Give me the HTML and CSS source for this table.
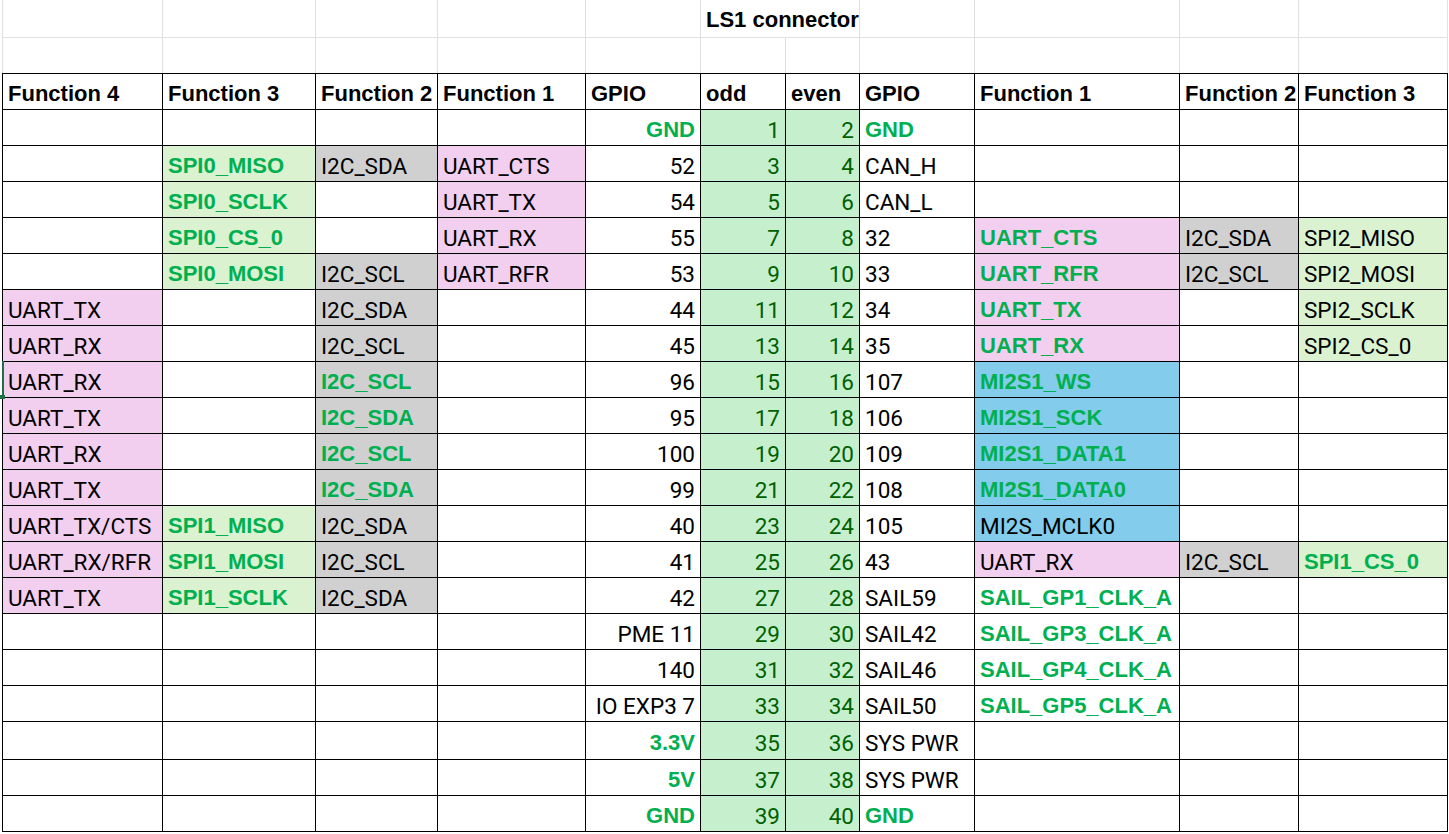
FILE: index.html
```html
<!DOCTYPE html>
<html lang="en">
<head>
<meta charset="utf-8">
<title>LS1 connector</title>
<link rel="stylesheet" href="styles.css">
</head>
<body>
<div class="sheet">
  <div class="top">
    <div class="g"></div><div class="g"></div><div class="g"></div><div class="g"></div><div class="g"></div>
    <div class="g title"><span>LS1 connector</span></div>
    <div class="g"></div><div class="g"></div><div class="g"></div><div class="g"></div>
    <div class="g"></div><div class="g"></div><div class="g"></div><div class="g"></div><div class="g"></div>
    <div class="g"></div><div class="g"></div><div class="g"></div><div class="g"></div><div class="g"></div><div class="g"></div>
  </div>
  <div class="tbl">
    <div class="c h">Function 4</div><div class="c h">Function 3</div><div class="c h">Function 2</div><div class="c h">Function 1</div><div class="c h">GPIO</div><div class="c h">odd</div><div class="c h">even</div><div class="c h">GPIO</div><div class="c h">Function 1</div><div class="c h">Function 2</div><div class="c h">Function 3</div>

    <div class="c"></div><div class="c"></div><div class="c"></div><div class="c"></div><div class="c r b">GND</div><div class="c r pin">1</div><div class="c r pin">2</div><div class="c b">GND</div><div class="c"></div><div class="c"></div><div class="c"></div>

    <div class="c"></div><div class="c lg b">SPI0_MISO</div><div class="c gy">I2C_SDA</div><div class="c pk">UART_CTS</div><div class="c r">52</div><div class="c r pin">3</div><div class="c r pin">4</div><div class="c">CAN_H</div><div class="c"></div><div class="c"></div><div class="c"></div>

    <div class="c"></div><div class="c lg b">SPI0_SCLK</div><div class="c"></div><div class="c pk">UART_TX</div><div class="c r">54</div><div class="c r pin">5</div><div class="c r pin">6</div><div class="c">CAN_L</div><div class="c"></div><div class="c"></div><div class="c"></div>

    <div class="c"></div><div class="c lg b">SPI0_CS_0</div><div class="c"></div><div class="c pk">UART_RX</div><div class="c r">55</div><div class="c r pin">7</div><div class="c r pin">8</div><div class="c">32</div><div class="c pk b">UART_CTS</div><div class="c gy">I2C_SDA</div><div class="c lg">SPI2_MISO</div>

    <div class="c"></div><div class="c lg b">SPI0_MOSI</div><div class="c gy">I2C_SCL</div><div class="c pk">UART_RFR</div><div class="c r">53</div><div class="c r pin">9</div><div class="c r pin">10</div><div class="c">33</div><div class="c pk b">UART_RFR</div><div class="c gy">I2C_SCL</div><div class="c lg">SPI2_MOSI</div>

    <div class="c pk">UART_TX</div><div class="c"></div><div class="c gy">I2C_SDA</div><div class="c"></div><div class="c r">44</div><div class="c r pin">11</div><div class="c r pin">12</div><div class="c">34</div><div class="c pk b">UART_TX</div><div class="c"></div><div class="c lg">SPI2_SCLK</div>

    <div class="c pk">UART_RX</div><div class="c"></div><div class="c gy">I2C_SCL</div><div class="c"></div><div class="c r">45</div><div class="c r pin">13</div><div class="c r pin">14</div><div class="c">35</div><div class="c pk b">UART_RX</div><div class="c"></div><div class="c lg">SPI2_CS_0</div>

    <div class="c pk">UART_RX</div><div class="c"></div><div class="c gy b">I2C_SCL</div><div class="c"></div><div class="c r">96</div><div class="c r pin">15</div><div class="c r pin">16</div><div class="c">107</div><div class="c bl b">MI2S1_WS</div><div class="c"></div><div class="c"></div>

    <div class="c pk">UART_TX</div><div class="c"></div><div class="c gy b">I2C_SDA</div><div class="c"></div><div class="c r">95</div><div class="c r pin">17</div><div class="c r pin">18</div><div class="c">106</div><div class="c bl b">MI2S1_SCK</div><div class="c"></div><div class="c"></div>

    <div class="c pk">UART_RX</div><div class="c"></div><div class="c gy b">I2C_SCL</div><div class="c"></div><div class="c r">100</div><div class="c r pin">19</div><div class="c r pin">20</div><div class="c">109</div><div class="c bl b">MI2S1_DATA1</div><div class="c"></div><div class="c"></div>

    <div class="c pk">UART_TX</div><div class="c"></div><div class="c gy b">I2C_SDA</div><div class="c"></div><div class="c r">99</div><div class="c r pin">21</div><div class="c r pin">22</div><div class="c">108</div><div class="c bl b">MI2S1_DATA0</div><div class="c"></div><div class="c"></div>

    <div class="c pk">UART_TX/CTS</div><div class="c lg b">SPI1_MISO</div><div class="c gy">I2C_SDA</div><div class="c"></div><div class="c r">40</div><div class="c r pin">23</div><div class="c r pin">24</div><div class="c">105</div><div class="c bl">MI2S_MCLK0</div><div class="c"></div><div class="c"></div>

    <div class="c pk">UART_RX/RFR</div><div class="c lg b">SPI1_MOSI</div><div class="c gy">I2C_SCL</div><div class="c"></div><div class="c r">41</div><div class="c r pin">25</div><div class="c r pin">26</div><div class="c">43</div><div class="c pk">UART_RX</div><div class="c gy">I2C_SCL</div><div class="c lg b">SPI1_CS_0</div>

    <div class="c pk">UART_TX</div><div class="c lg b">SPI1_SCLK</div><div class="c gy">I2C_SDA</div><div class="c"></div><div class="c r">42</div><div class="c r pin">27</div><div class="c r pin">28</div><div class="c">SAIL59</div><div class="c b">SAIL_GP1_CLK_A</div><div class="c"></div><div class="c"></div>

    <div class="c"></div><div class="c"></div><div class="c"></div><div class="c"></div><div class="c r">PME 11</div><div class="c r pin">29</div><div class="c r pin">30</div><div class="c">SAIL42</div><div class="c b">SAIL_GP3_CLK_A</div><div class="c"></div><div class="c"></div>

    <div class="c"></div><div class="c"></div><div class="c"></div><div class="c"></div><div class="c r">140</div><div class="c r pin">31</div><div class="c r pin">32</div><div class="c">SAIL46</div><div class="c b">SAIL_GP4_CLK_A</div><div class="c"></div><div class="c"></div>

    <div class="c"></div><div class="c"></div><div class="c"></div><div class="c"></div><div class="c r">IO EXP3 7</div><div class="c r pin">33</div><div class="c r pin">34</div><div class="c">SAIL50</div><div class="c b">SAIL_GP5_CLK_A</div><div class="c"></div><div class="c"></div>

    <div class="c tall"></div><div class="c tall"></div><div class="c tall"></div><div class="c tall"></div><div class="c tall r b">3.3V</div><div class="c tall r pin">35</div><div class="c tall r pin">36</div><div class="c tall">SYS PWR</div><div class="c tall"></div><div class="c tall"></div><div class="c tall"></div>

    <div class="c"></div><div class="c"></div><div class="c"></div><div class="c"></div><div class="c r b">5V</div><div class="c r pin">37</div><div class="c r pin">38</div><div class="c">SYS PWR</div><div class="c"></div><div class="c"></div><div class="c"></div>

    <div class="c"></div><div class="c"></div><div class="c"></div><div class="c"></div><div class="c r b">GND</div><div class="c r pin">39</div><div class="c r pin">40</div><div class="c b">GND</div><div class="c"></div><div class="c"></div><div class="c"></div>
  </div>
  <div class="sel"></div>
</div>
</body>
</html>
```
FILE: styles.css
```css
html, body {
  margin: 0;
  padding: 0;
  background: #ffffff;
}
body {
  font-family: Roboto, "Liberation Sans", sans-serif;
  font-size: 22.5px;
  color: #000000;
}
.sheet {
  position: relative;
  width: 1449px;
  height: 834px;
  overflow: hidden;
}
.top {
  display: grid;
  margin-left: 2px;
  grid-template-columns: 160px 153px 122px 148px 115px 85px 74px 115px 205px 119px 149px;
  grid-template-rows: 38px 35px;
  border-left: 1px solid #e1e1e1;
  width: 1446px;
  box-sizing: border-box;
}
.g {
  box-sizing: border-box;
  border-right: 1px solid #e1e1e1;
}
.top .g:nth-child(-n+10) {
  border-bottom: 1px solid #e1e1e1;
}
.title {
  grid-column: span 2;
  display: flex;
  align-items: flex-end;
  padding: 0 5px 6px;
  font-family: "Liberation Sans", Arial, sans-serif;
  font-size: 22px;
  font-weight: bold;
  line-height: 22px;
  white-space: nowrap;
}
.tbl {
  display: grid;
  margin-left: 2px;
  width: 1446px;
  box-sizing: border-box;
  grid-template-columns: 160px 153px 122px 148px 115px 85px 74px 115px 205px 119px 149px;
  grid-template-rows: repeat(18, 36px) 38px 36px 36px;
  border-left: 1px solid #000000;
  border-top: 1px solid #000000;
}
.c {
  box-sizing: border-box;
  border-right: 1px solid #000000;
  border-bottom: 1px solid #000000;
  display: flex;
  align-items: flex-end;
  padding: 0 5px 4px;
  line-height: 22px;
  white-space: nowrap;
}
.c.tall {
  padding-bottom: 5px;
}
.r {
  justify-content: flex-end;
}
.h {
  font-family: "Liberation Sans", Arial, sans-serif;
  font-size: 22px;
  font-weight: bold;
}
.b {
  font-family: "Liberation Sans", Arial, sans-serif;
  font-size: 22px;
  font-weight: bold;
  color: #00b050;
}
.pk { background: #f2ceef; }
.lg { background: #daf2d0; }
.gy { background: #d0d0d0; }
.bl { background: #83cceb; }
.pin {
  background: #c6efce;
  color: #006100;
}
.sel {
  position: absolute;
  left: 2px;
  top: 361px;
  width: 2px;
  height: 35px;
  background: #1e7145;
}
.sel::after {
  content: "";
  position: absolute;
  left: -2px;
  top: 34px;
  width: 5px;
  height: 4px;
  background: #1e7145;
}
```
